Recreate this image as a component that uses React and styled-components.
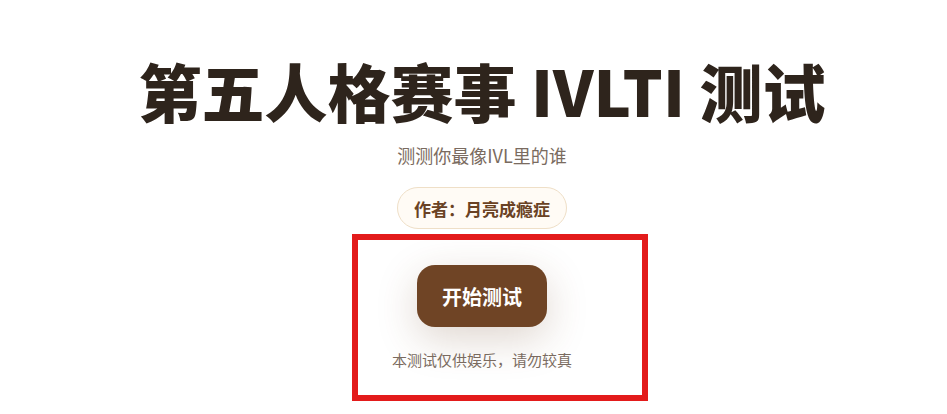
import React from "react";
import styled, { createGlobalStyle } from "styled-components";

const GlobalStyle = createGlobalStyle`
  html, body {
    margin: 0;
    background: #ffffff;
    font-family: "Noto Sans CJK SC", "Noto Sans", sans-serif;
  }
`;

const Page = styled.div`
  position: relative;
  width: 947px;
  height: 414px;
  overflow: hidden;
  box-sizing: border-box;
  padding: 52px 0 0 17px;
  display: flex;
  flex-direction: column;
  align-items: center;
`;

const Title = styled.h1`
  margin: 0;
  font-size: 63px;
  line-height: 76px;
  font-weight: 900;
  color: #2e241c;
  white-space: nowrap;
`;

const Subtitle = styled.p`
  margin: 15px 0 0;
  font-size: 18px;
  line-height: 24px;
  color: #7a6b60;
`;

const Author = styled.div`
  margin-top: 20px;
  height: 42px;
  box-sizing: border-box;
  padding: 0 16px;
  display: flex;
  align-items: center;
  border: 1px solid #efdfc7;
  border-radius: 21px;
  background: #fffbf5;
  font-size: 17px;
  font-weight: 700;
  color: #6a4224;
`;

const StartButton = styled.button`
  margin-top: 36px;
  width: 130px;
  height: 62px;
  border: none;
  border-radius: 18px;
  background: #6f4425;
  color: #ffffff;
  font-family: inherit;
  font-size: 20px;
  font-weight: 700;
  cursor: pointer;
  box-shadow: 0 12px 40px rgba(111, 68, 37, 0.22);
`;

const Note = styled.p`
  margin: 24px 0 0;
  font-size: 15px;
  line-height: 18px;
  color: #7a6b60;
`;

const Highlight = styled.div`
  position: absolute;
  left: 352px;
  top: 234px;
  width: 296px;
  height: 167px;
  box-sizing: border-box;
  border: 6px solid #e31b1b;
  pointer-events: none;
`;

export default function App() {
  return (
    <>
      <GlobalStyle />
      <Page>
        <Title>第五人格赛事 IVLTI 测试</Title>
        <Subtitle>测测你最像IVL里的谁</Subtitle>
        <Author>作者：月亮成瘾症</Author>
        <StartButton>开始测试</StartButton>
        <Note>本测试仅供娱乐，请勿较真</Note>
        <Highlight />
      </Page>
    </>
  );
}
